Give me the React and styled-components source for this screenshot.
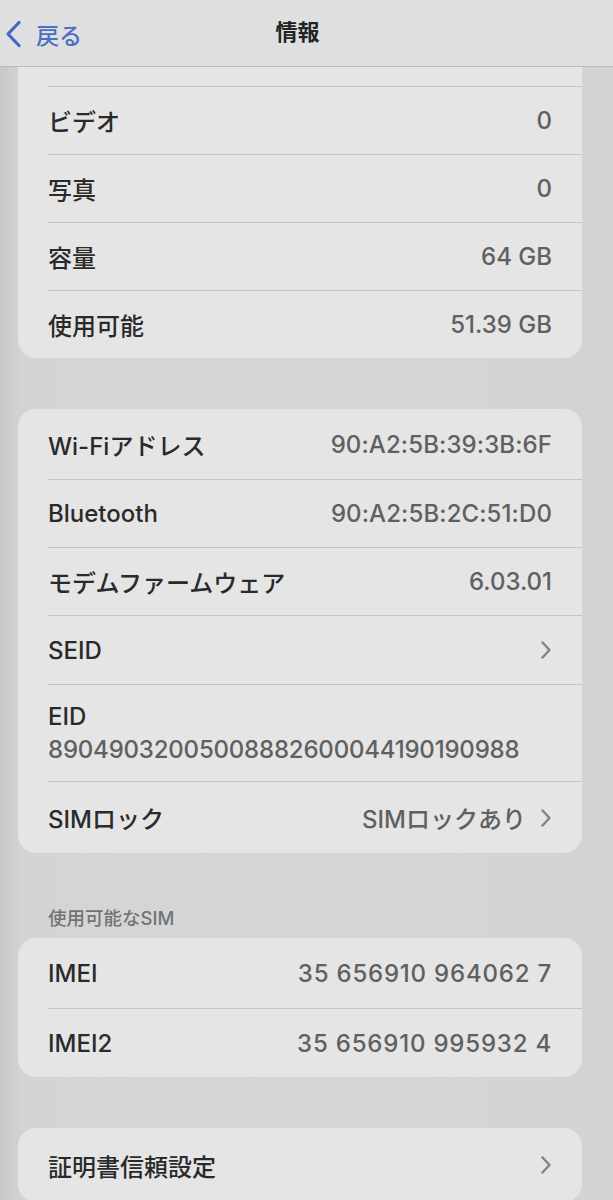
import React from "react";
import styled, { createGlobalStyle } from "styled-components";

const Global = createGlobalStyle`
  html, body { margin: 0; padding: 0; }
  *, *::before, *::after { box-sizing: border-box; }
  body {
    background: #d3d5d5;
    font-family: "Inter", "Noto Sans CJK JP", sans-serif;
    -webkit-font-smoothing: antialiased;
  }
`;

const Page = styled.div`
  position: relative;
  width: 613px;
  height: 1200px;
  overflow: hidden;
  background: linear-gradient(90deg, #c6c8c9 0px, #d3d5d5 24px, #d5d7d7 300px, #d2d3d4 613px);
`;

const NavBar = styled.div`
  position: absolute;
  top: 0;
  left: 0;
  right: 0;
  height: 67px;
  background: #dfdfdf;
  border-bottom: 1px solid #bbbbbb;
  display: flex;
  align-items: center;
  justify-content: center;
  z-index: 2;
`;

const BackButton = styled.div`
  position: absolute;
  left: 4px;
  top: 17px;
  display: flex;
  align-items: center;
  gap: 14px;
  color: #4a6fc4;
  font-size: 23px;
  font-weight: 500;
`;

const Title = styled.div`
  font-size: 22px;
  font-weight: 600;
  color: #232323;
  margin-top: -6px;
  margin-left: -18px;
`;

const Content = styled.div`
  display: flex;
  flex-direction: column;
  padding: 0 31px 0 18px;
`;

const Card = styled.div`
  background: #e5e5e6;
  border-radius: 18px;
  margin-top: ${(p) => p.$gap || 0}px;
  padding-top: ${(p) => p.$lead || 0}px;
  overflow: hidden;
`;

const Row = styled.div`
  display: flex;
  align-items: center;
  justify-content: space-between;
  margin-left: 30px;
  padding-right: 30px;
  height: ${(p) => p.$h || 68}px;
  border-top: ${(p) => (p.$first ? "none" : "1px solid #c4c5c6")};
`;

const StackRow = styled.div`
  display: flex;
  flex-direction: column;
  justify-content: center;
  gap: 4px;
  margin-left: 30px;
  padding-right: 30px;
  height: 97px;
  border-top: 1px solid #c4c5c6;
`;

const Label = styled.span`
  font-size: 24px;
  font-weight: 500;
  color: #2a2a2a;
`;

const Value = styled.span`
  font-size: 24px;
  font-weight: 500;
  color: #606062;
  display: flex;
  align-items: center;
  gap: 14px;
  letter-spacing: ${(p) => p.$ls || 0}px;
`;

const LongValue = styled.span`
  font-size: 24px;
  font-weight: 500;
  color: #606062;
  letter-spacing: -0.2px;
`;

const SectionHeader = styled.div`
  font-size: 18.5px;
  font-weight: 500;
  color: #737375;
  padding-left: 30px;
  margin-top: 51px;
  margin-bottom: 8px;
`;

const Chevron = () => (
  <svg width="12" height="20" viewBox="0 0 12 20">
    <path d="M2.5 2.5 L9.5 10 L2.5 17.5" fill="none" stroke="#828285" strokeWidth="2.4" strokeLinecap="round" strokeLinejoin="round" />
  </svg>
);

const BackChevron = () => (
  <svg width="18" height="28" viewBox="0 0 18 28">
    <path d="M15 2.5 L4 14 L15 25.5" fill="none" stroke="#3f66c4" strokeWidth="3.2" strokeLinecap="round" strokeLinejoin="round" />
  </svg>
);

export default function App() {
  return (
    <Page>
      <Global />
      <NavBar>
        <BackButton>
          <BackChevron />
          <span>戻る</span>
        </BackButton>
        <Title>情報</Title>
      </NavBar>
      <Content>
        <Card $lead={86}>
          <Row><Label>ビデオ</Label><Value>0</Value></Row>
          <Row><Label>写真</Label><Value>0</Value></Row>
          <Row><Label>容量</Label><Value>64 GB</Value></Row>
          <Row><Label>使用可能</Label><Value>51.39 GB</Value></Row>
        </Card>
        <Card $gap={51}>
          <Row $first $h={70}><Label>Wi-Fiアドレス</Label><Value $ls={0.1}>90:A2:5B:39:3B:6F</Value></Row>
          <Row><Label>Bluetooth</Label><Value $ls={0.1}>90:A2:5B:2C:51:D0</Value></Row>
          <Row><Label>モデムファームウェア</Label><Value>6.03.01</Value></Row>
          <Row $h={69}><Label>SEID</Label><Value><Chevron /></Value></Row>
          <StackRow>
            <Label>EID</Label>
            <LongValue>89049032005008882600044190190988</LongValue>
          </StackRow>
          <Row $h={72}><Label>SIMロック</Label><Value>SIMロックあり<Chevron /></Value></Row>
        </Card>
        <SectionHeader>使用可能なSIM</SectionHeader>
        <Card>
          <Row $first $h={70}><Label>IMEI</Label><Value $ls={0.8}>35 656910 964062 7</Value></Row>
          <Row $h={69}><Label>IMEI2</Label><Value $ls={0.8}>35 656910 995932 4</Value></Row>
        </Card>
        <Card $gap={51}>
          <Row $first $h={74}><Label>証明書信頼設定</Label><Value><Chevron /></Value></Row>
        </Card>
      </Content>
    </Page>
  );
}
